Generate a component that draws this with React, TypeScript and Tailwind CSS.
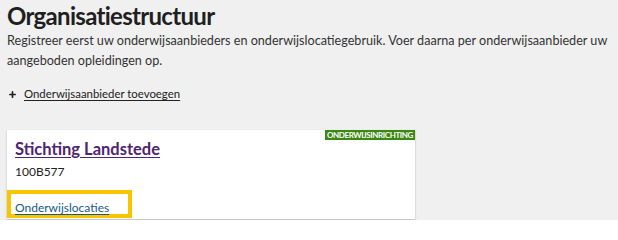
import { Plus } from "lucide-react";

const font = { fontFamily: "Lato, 'Open Sans', sans-serif" };

function ProviderCard() {
  return (
    <div className="relative w-[408px] bg-white pb-[1px] shadow-[0_1px_2px_rgba(0,0,0,0.25)]">
      <span className="absolute right-0 top-0 bg-[#3a8712] px-[2px] text-[8px] font-bold leading-[10px] tracking-[-0.4px] text-white">
        ONDERWIJSINRICHTING
      </span>
      <div className="px-2 pt-[7px]">
        <a href="#" className="text-[16.5px] font-bold leading-[22px] text-[#4f2470] underline underline-offset-2">
          Stichting Landstede
        </a>
        <p className="mt-[3px] text-[12px] leading-[16px] text-[#222]">100B577</p>
      </div>
      <div className="mt-[10px] h-[28px] w-[125px] border-[4px] border-[#f9c500] bg-white px-1">
        <a href="#" className="text-[12px] leading-[18px] text-[#15598a] underline underline-offset-2">
          Onderwijslocaties
        </a>
      </div>
    </div>
  );
}

export default function App() {
  return (
    <div className="min-h-[220px] bg-[#f0f0f0] px-[7px] pt-[1px] text-[#222]" style={font}>
      <h1 className="text-[24px] font-bold leading-[30px] tracking-[-0.7px] text-[#1f1f1f]">Organisatiestructuur</h1>
      <p className="whitespace-nowrap text-[12.6px] leading-[20px] text-[#333]">
        Registreer eerst uw onderwijsaanbieders en onderwijslocatiegebruik. Voer daarna per onderwijsaanbieder uw
        <br />
        aangeboden opleidingen op.
      </p>
      <div className="mt-[15px] flex h-[16px] items-center gap-[7px] pl-[1px]">
        <Plus className="h-[9px] w-[9px]" strokeWidth={4.5} />
        <a href="#" className="text-[11.4px] leading-[16px] text-[#222] underline underline-offset-2">
          Onderwijsaanbieder toevoegen
        </a>
      </div>
      <div className="mt-[28px]">
        <ProviderCard />
      </div>
    </div>
  );
}
